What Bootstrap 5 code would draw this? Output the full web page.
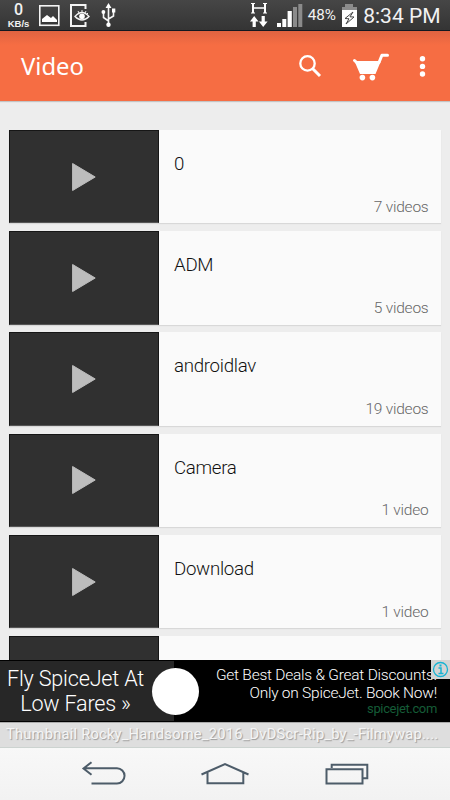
<!DOCTYPE html>
<html lang="en">
<head>
<meta charset="utf-8">
<meta name="viewport" content="width=device-width, initial-scale=1">
<title>Video</title>
<link href="https://cdn.jsdelivr.net/npm/bootstrap@5.3.0/dist/css/bootstrap.min.css" rel="stylesheet">
<style>
body{font-family:Roboto,"Liberation Sans",sans-serif;background:#ededed;height:800px;overflow:hidden;line-height:1}
svg{display:block;flex:none}
.status{height:31px;background:linear-gradient(#464646,#343434);border-bottom:1px solid #111820;color:#f2f2f2}
.rate{width:25px;margin-left:6px;padding-top:1px}
.rate b{font:500 16px/17px Roboto,sans-serif}
.rate span{font:700 9.5px/9px "Liberation Sans",sans-serif;margin-top:1px}
.batt{font-size:15.2px;letter-spacing:-.1px;margin-left:4px;padding-top:2px}
.clock{font-size:21px;white-space:nowrap;margin:0 9.500px 0 5.500px;padding-top:3px}
.appbar{height:70px;background:linear-gradient(#df6341,#f66d43 14px);box-shadow:0 1px 1px #c4c4c4;color:#fff;position:relative}
.appbar h1{font:400 23.8px/1 "Noto Sans",sans-serif;margin:2px 0 0 21px}
.folders{height:559px;padding:29px 9px 0;overflow:hidden}
.folder{height:93.3px;margin-bottom:7.93px;background:#fafafa;box-shadow:0 1px 1px #d8d8d8;flex:none}
.thumb{width:150px;background:#303030;border:1px solid #161616;border-bottom-color:#555}
.info{padding:25px 12.5px 8px 15px}
.name{font-size:18.7px;font-weight:300;letter-spacing:-.3px;color:#111}
.count{font-size:15.5px;font-weight:300;letter-spacing:-.22px;color:#666}
.ad{height:62px;background:#000;color:#fff;font-weight:300;position:relative}
.ad-left{width:174px;background:#272727;border-top:1px solid #000;border-bottom:1px solid #000;font-size:21.6px;letter-spacing:-.2px;line-height:25px;padding:4.500px 23px 0 0;text-align:center;white-space:nowrap}
.disc{position:absolute;left:152px;top:8px;width:47px;height:47px;border-radius:50%;background:#fff}
.ad-right{padding:6px 13px 0 0;white-space:nowrap;font-size:15.5px;letter-spacing:-.24px;line-height:18px}
.ad-right small{font-size:13px;letter-spacing:-.35px;line-height:13px;color:#155c37;font-weight:400}
.info-mark{position:absolute;right:0;top:0;width:19px;height:19px;background:#d4d4d4}
.caption{height:26px;background:#dedede;border-bottom:1px solid #ccd3d0;border-top:1px solid #aaa;color:#f5f5f5;text-shadow:1px 1px 1px #999;font-size:14.7px;letter-spacing:.22px;padding:0 0 2px 6px;white-space:nowrap}
.keys{height:52px;background:linear-gradient(#f8f8f8,#f2f2f2)}
</style>
<script src="https://cdn.jsdelivr.net/npm/bootstrap@5.3.0/dist/js/bootstrap.bundle.min.js"></script>
</head>
<body class="d-flex flex-column">
<div class="status d-flex align-items-center flex-shrink-0">
  <div class="rate d-flex flex-column align-items-center align-self-start"><b>0</b><span>KB/s</span></div>
  <svg class="ms-2" width="90" height="30" viewBox="39 0 90 30" fill="none" stroke="#f4f4f4">
    <rect x="39.8" y="5.8" width="19" height="19.500" stroke-width="1.6"/><path d="M42 22v-3l5-4 4 3 2-2 4 4v2z" fill="#fff" stroke="none"/>
    <path d="M85.500 9V5H71v21h14.500v-4" stroke-width="2"/><path d="M75 16.500q7-8 14 0q-7 7-14 0z" fill="#3d3d3d" stroke-width="1.4"/><circle cx="82" cy="16.300" r="2.800" fill="#fff" stroke="none"/><path d="M82 10v2m-4-1 1 2m7-2-1 2m3 0-1 1" stroke-width="1"/>
    <path d="M108.500 25V6M108.500 21l-5-3.500V12M108.500 19l5-3V11" stroke-width="1.6"/><path d="M105.500 8l3-5 3 5zM112 8.500h3.300v4H112z" fill="#fff" stroke="none"/><circle cx="103.400" cy="12" r="1.900" fill="#fff" stroke="none"/><circle cx="108.500" cy="24.800" r="2.200" fill="#fff" stroke="none"/>
  </svg>
  <svg class="ms-auto" width="55" height="30" viewBox="249 0 55 30" fill="#fff">
    <path d="M251 3h4v1h-1v3.200h10V4h-1V3h4v1h-1v8.500h1v1h-4v-1h1V8.800h-10v3.700h1v1h-4v-1h1V4h-1z"/>
    <path d="M254.200 16l4.300 5.500h-2.700V27h-3.200v-5.500H250zM263.200 27l-4.300-5.500h2.700V16h3.200v5.500h2.800z"/>
    <path d="M277 23h4v4h-4zM282.300 19h4v8h-4zM287.600 11h4.200v16h-4.200z"/><path d="M293 7h4v20h-4zM298.300 4h4v23h-4z" fill="#8b8b8b"/>
  </svg>
  <span class="batt">48%</span>
  <svg width="17" height="24" style="margin-left:5px" viewBox="341 3 17 24"><path d="M345 4h8v3h4v4h-15V7h3z" fill="#8b8b8b"/><path d="M342 10h15v17h-15z" fill="#fff"/><path d="M353 12l-8 6.500 4 .3-3 5.200 8-7-4-.2z" fill="#fff" stroke="#444" stroke-width="1"/></svg>
  <span class="clock">8:34 PM</span>
</div>

<header class="appbar d-flex align-items-center flex-shrink-0">
  <h1>Video</h1>
  <svg class="ms-auto" width="130" height="40" style="margin-right:20px" viewBox="300 46 130 40" fill="none" stroke="#fff" overflow="visible">
    <circle cx="307.500" cy="63.400" r="7.200" stroke-width="2.300"/><path d="M312.500 68.500l7.500 7.500" stroke-width="3"/>
    <path d="M354.500 60.500l2.200 2H379l2.900-7.200h5.600" stroke-width="3" stroke-linecap="round" stroke-linejoin="round"/><path d="M354 60l6 14h15.500l5-12h-22z" fill="#fff" stroke="none"/>
    <g fill="#fff" stroke="none"><circle cx="362.400" cy="77.600" r="2.800"/><circle cx="372.400" cy="77.600" r="2.800"/><circle cx="422.500" cy="58.800" r="2.700"/><circle cx="422.500" cy="66.400" r="2.700"/><circle cx="422.500" cy="74" r="2.700"/></g>
  </svg>
</header>

<main class="folders d-flex flex-column flex-shrink-0" id="folders">
</main>

<section class="ad d-flex flex-shrink-0">
  <div class="ad-left">Fly SpiceJet At<br>Low Fares »</div>
  <div class="ad-right d-flex flex-column flex-grow-1 align-items-end"><span>Get Best Deals &amp; Great Discounts.</span><span>Only on SpiceJet. Book Now!</span><small>spicejet.com</small></div>
  <div class="disc"></div>
  <div class="info-mark"><svg width="19" height="19" fill="none" stroke="#17b3d3"><circle cx="9.500" cy="9.500" r="7" stroke-width="1.300"/><path d="M7.500 8H10v5.500M7.500 13.500h5" stroke-width="1.500"/><path d="M8.500 4.500h2v2h-2z" fill="#17b3d3" stroke="none"/></svg></div>
</section>
<div class="caption d-flex align-items-center flex-shrink-0"><span>Thumbnail Rocky_Handsome_2016_DvDScr-Rip_by_-Filmywap....</span></div>
<nav class="keys d-flex align-items-center justify-content-center flex-shrink-0">
  <svg width="450" height="50" viewBox="0 749 450 50" fill="none" stroke="#4d5c69" stroke-width="2">
    <path d="M91.500 762.200l-8 6.300 8 6.300M84 768.300h33a7.500 7.500 0 0 1 0 15.100H91.500"/>
    <path d="M201.500 774.500L225 764l23.500 10.500M207.500 772.500v10.800h35.800v-10.800"/>
    <path d="M326.500 769.200h36v14.200h-36zM331.700 768v-3.200h35.600v13.400H363"/>
  </svg>
</nav>
<script>
const play='<svg width="26" height="30" viewBox="0 0 26 30"><path d="M1.600 1.500L24.200 15 1.600 28.500z" fill="#bdbdbd" stroke="#bdbdbd" stroke-linejoin="round"/></svg>';
const rows=[["0","7 videos"],["ADM","5 videos"],["androidlav","19 videos"],["Camera","1 video"],["Download","1 video"],["",""]];
document.getElementById("folders").innerHTML=rows.map(r=>`<article class="folder d-flex"><div class="thumb d-flex align-items-center justify-content-center flex-shrink-0">${play}</div><div class="info d-flex flex-column justify-content-between flex-grow-1"><div class="name">${r[0]}</div><div class="count align-self-end">${r[1]}</div></div></article>`).join("");
</script>
</body>
</html>
